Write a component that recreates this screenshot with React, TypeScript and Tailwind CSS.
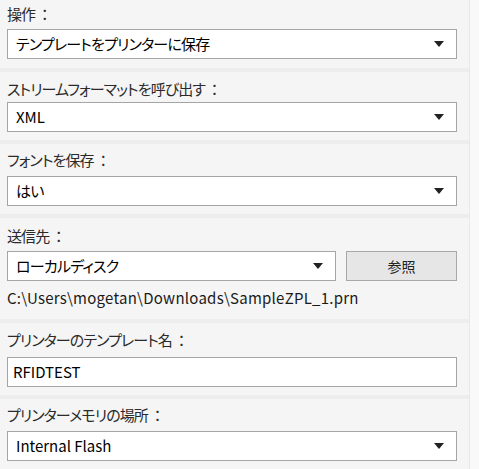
import React from 'react'

const font = { fontFamily: '"Noto Sans CJK JP", "Noto Sans", sans-serif' }

function Caret() {
  return (
    <svg width="10" height="6" viewBox="0 0 10 6" className="shrink-0">
      <path d="M0 0 L10 0 L5 6 Z" fill="#222" />
    </svg>
  )
}

function Select({ value, latin = false, className = '' }: { value: string; latin?: boolean; className?: string }) {
  return (
    <div className={`flex h-[30px] items-center justify-between border border-[#a5a5a5] bg-white pl-[8px] pr-[12px] text-[15px] text-black ${className}`}>
      {latin ? <span>{value}</span> : <span className='tracking-[-0.8px] [font-feature-settings:"palt"]'>{value}</span>}
      <Caret />
    </div>
  )
}

function Label({ children }: { children: string }) {
  return (
    <div className="h-[22px] text-[15px] leading-[22px] text-[#2a2a2a]">
      <span className='tracking-[-0.9px] [font-feature-settings:"palt"]'>{children}</span>
      <span className="ml-[2px]">：</span>
    </div>
  )
}

export default function App() {
  return (
    <div className="flex h-[469px] w-[479px] bg-[#f9f9f9] overflow-hidden" style={font}>
      <div className="flex w-[470px] flex-col gap-[4px] bg-[#ededed] border-r border-[#e8e8e8]">
        <div className="bg-[#f5f5f5] px-[7px] pt-[3px] pb-[9px]">
          <Label>操作</Label>
          <div className="mt-[4px] w-[450px]">
            <Select value="テンプレートをプリンターに保存" />
          </div>
        </div>
        <div className="bg-[#f5f5f5] px-[7px] pt-[6px] pb-[8px]">
          <Label>ストリームフォーマットを呼び出す</Label>
          <div className="mt-[2px] w-[450px]">
            <Select value="XML" latin />
          </div>
        </div>
        <div className="bg-[#f5f5f5] px-[7px] pt-[5px] pb-[8px]">
          <Label>フォントを保存</Label>
          <div className="mt-[5px] w-[450px]">
            <Select value="はい" />
          </div>
        </div>
        <div className="bg-[#f5f5f5] px-[7px] pt-[7px] pb-[10px]">
          <Label>送信先</Label>
          <div className="mt-[4px] flex w-[450px] gap-[10px]">
            <Select value="ローカルディスク" className="w-[329px]" />
            <button className="h-[30px] flex-1 border border-[#a8a8a8] bg-[#e6e6e6] text-[14px] text-[#222]">参照</button>
          </div>
          <div className="mt-[6px] h-[22px] text-[15px] leading-[22px] tracking-[0.25px] text-[#1a1a1a]">C:\Users\mogetan\Downloads\SampleZPL_1.prn</div>
        </div>
        <div className="bg-[#f5f5f5] px-[7px] pt-[6px] pb-[8px]">
          <Label>プリンターのテンプレート名</Label>
          <div className="mt-[6px] flex h-[30px] w-[450px] items-center border border-[#a5a5a5] bg-white pl-[5px] text-[15px] text-black">RFIDTEST</div>
        </div>
        <div className="flex-1 bg-[#f5f5f5] px-[7px] pt-[5px]">
          <Label>プリンターメモリの場所</Label>
          <div className="mt-[5px] w-[450px]">
            <Select value="Internal Flash" latin />
          </div>
        </div>
      </div>
    </div>
  )
}
